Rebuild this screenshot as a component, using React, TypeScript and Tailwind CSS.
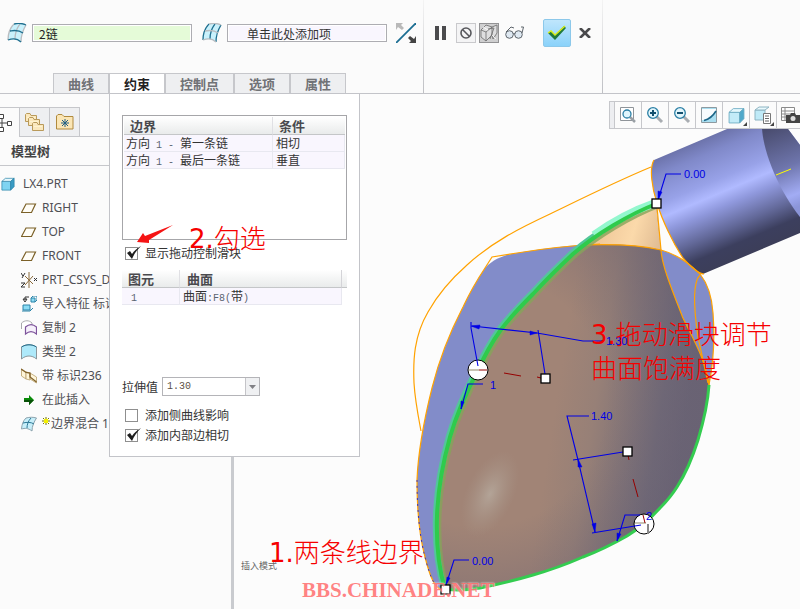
import { ReactNode } from "react";

const SONG = "font-['Noto_Sans_CJK_SC',sans-serif]";

const QuiltIcon = ({ flip = false }: { flip?: boolean }) => (
  <svg width="20" height="20" viewBox="0 0 20 20" fill="none">
    <path d="M7 1C11 0 15 0 19 2C16 7 14 12 14 19C10 15 6 16 1 17C1 11 3 5 7 1Z" fill="#c9f1fc" />
    <path d="M7 1C3 5 1 11 1 17M19 2C16 7 14 12 14 19" stroke={flip ? "#1f6f8f" : "#b8bcc0"} strokeWidth="1.3" />
    <path d="M13 1C9 6 8 10 8 16" stroke={flip ? "#1f6f8f" : "#b8bcc0"} strokeWidth="1.3" />
    <path d="M7 1C11 0 15 0 19 2M1 17C6 15 10 15 14 19M3 8C8 7 12 7 16 10" stroke={flip ? "#b8bcc0" : "#1f6f8f"} strokeWidth="1.3" />
  </svg>
);

const SwapIcon = () => (
  <svg width="20" height="20" viewBox="0 0 20 20">
    <path d="M0 20L20 0" stroke="#1b6d92" strokeWidth="1.8" />
    <path d="M0 0H7L5 2L8 5L6 7L2 4L0 7Z" fill="#b9b9b9" />
    <path d="M20 20H13L15 18L12 15L14 13L18 16L20 13Z" fill="#444" />
  </svg>
);

const CubeIcon = ({ size = 16, pale = false }: { size?: number; pale?: boolean }) => (
  <svg width={size} height={size} viewBox="0 0 16 16" stroke={pale ? "#6aaac2" : "#2a83a8"} strokeWidth="0.8">
    <path d="M1 5H11V15H1Z" fill={pale ? "#c3ebf8" : "#7fd4f2"} />
    <path d="M1 5L5 1.500H15L11 5Z" fill="#e6f8fd" />
    <path d="M11 5L15 1.500V11L11 15Z" fill={pale ? "#4fa9cb" : "#3a9cc4"} />
  </svg>
);

const FolderIcon = ({ x = 0, y = 0 }: { x?: number; y?: number }) => (
  <g transform={`translate(${x} ${y})`}>
    <path d="M0.500 8.500V1.500L1.500 0.500H5L6 2.500H11.500V8.500Z" fill="#fbe8bd" stroke="#b99a5b" />
    <path d="M2 4.500H10" stroke="#fff3d0" />
  </g>
);

const PlaneIcon = () => (
  <svg width="16" height="16" viewBox="0 0 16 16">
    <path d="M5 4H14.500L10.500 12.500H0.500Z" fill="#fffdf6" stroke="#7b6027" strokeWidth="1.200" />
  </svg>
);

const CsysIcon = () => (
  <svg width="16" height="16" viewBox="0 0 16 16" fill="none">
    <path d="M8 0V16M4 4L12 12M12 4L4 13" stroke="#8a6a3a" />
    <path d="M0 1L2 4M4 1L1 6M0 11H4L0 15H4M13 6L16 9M16 6L13 9" stroke="#333" />
  </svg>
);

const ImportIcon = () => (
  <svg width="16" height="16" viewBox="0 0 16 16">
    <path d="M10 2H14V6H10ZM2 9H9V14H2Z" fill="#8bdcf5" stroke="#2a83a8" />
    <path d="M10 2L12 0H16V4L14 6M1 15H9L12 12" fill="none" stroke="#2a83a8" />
    <path d="M8 1H4V4M2 3L4 6L6 3Z" fill="none" stroke="#333" />
  </svg>
);

const CopyIcon = () => (
  <svg width="16" height="16" viewBox="0 0 16 16">
    <path d="M0.500 9V3C4 0 8 0 11 3V6" fill="#fff" stroke="#a9a9ad" />
    <path d="M4.500 14V7C8 4 12 4 15.500 7V14C12 11 8 11 4.500 14Z" fill="#f6f0fb" stroke="#7d539b" strokeWidth="1.200" />
  </svg>
);

const StyleIcon = () => (
  <svg width="16" height="16" viewBox="0 0 16 16">
    <path d="M0.500 15V3C5 0 11 0 15.500 3V15C11 11 5 11 0.500 15Z" fill="#aee9fa" stroke="#8c979c" />
    <path d="M0.500 3C5 0 11 0 15.500 3" fill="none" stroke="#1f6f8f" />
  </svg>
);

const BandIcon = () => (
  <svg width="16" height="16" viewBox="0 0 16 16" fill="#fff6da" stroke="#b7a06c" strokeWidth="0.800">
    <path d="M0.500 1L5 4V11L0.500 8Z" />
    <path d="M5 4L9 5V12L5 11ZM9 5L15.500 9V15L9 11Z" />
    <path d="M0 1L5 4.500L9 5V9L15.500 14" fill="none" stroke="#80622b" strokeWidth="1.300" />
  </svg>
);

const InsertIcon = () => (
  <svg width="16" height="16" viewBox="0 0 16 16">
    <path d="M3 6H8V3L13 8L8 13V10H3Z" fill="#0a8a0a" />
    <path d="M3 8H13L8 13V10H3Z" fill="#075207" />
  </svg>
);

const BlendIcon = () => (
  <svg width="16" height="16" viewBox="0 0 16 16">
    <path d="M5 2C9 1 12 1 15.500 2C13 6 11 10 11 15C7 12 4 12 0.500 13C1 8 2 5 5 2Z" fill="#c7effa" stroke="#8da3ad" />
    <path d="M10 2C7 5 6 9 6 12M2 7C6 6 10 6 13 8" fill="none" stroke="#2d7896" />
  </svg>
);

const tabs = ["曲线", "约束", "控制点", "选项", "属性"];

const Divider = () => (
  <div className="w-px shrink-0 self-stretch bg-gradient-to-b from-[#f4f4f4] to-[#bfc0c4]" />
);

const CheckRow = ({ id, label, checked }: { id: string; label: string; checked?: boolean }) => (
  <div className="flex h-5 items-center gap-[7px] pl-[3px]">
    <span className="relative size-[13px]">
      <input
        id={id}
        type="checkbox"
        defaultChecked={checked}
        className="peer block size-[13px] appearance-none border border-[#8f8f8f] bg-white"
      />
      <svg
        className="pointer-events-none absolute top-0 left-0 hidden overflow-visible peer-checked:block"
        width="16"
        height="13"
        viewBox="0 0 16 13"
      >
        <path d="M2 6L5 4L7 7C9 4 12 1 16 -1C12 3 9 7 7 12Z" fill="#1d1d1d" />
      </svg>
    </span>
    <label htmlFor={id} className="text-xs text-[#333]">
      {label}
    </label>
  </div>
);

const Mono = ({ children }: { children: ReactNode }) => (
  <span className="font-['Liberation_Mono',monospace] text-[10px] leading-none whitespace-pre text-[#5b6570]">
    {children}
  </span>
);

const ConstraintPanel = () => {
  const head = "h-[18px] border-b border-[#c4c6c8] bg-gradient-to-b from-white to-[#e9ebeb] p-0 text-left text-[13px] leading-[17px] font-bold text-[#4a4a4e]";
  const cell = "h-[17px] border-r border-b border-[#e8e8f0] bg-[#f9f6fe] p-0 text-xs leading-4";
  return (
    <section className="absolute top-full left-[109px] z-20 h-[364px] w-[251px] border border-[#c3c4c9] bg-white px-3 pt-[21px] text-[#333]">
      <div className="h-[125px] w-[225px] border border-[#a6a6a9] p-px">
        <table className="w-full table-fixed border-separate border-spacing-0">
          <thead>
            <tr>
              <th className={`${head} w-[149px] border-r border-r-[#e0e0e4] pl-[6px]`}>边界</th>
              <th className={`${head} pl-[6px]`}>条件</th>
            </tr>
          </thead>
          <tbody>
            <tr>
              <td className={`${cell} pl-[2px]`}>
                方向<Mono> 1 - </Mono>第一条链
              </td>
              <td className={`${cell} pl-[3px]`}>相切</td>
            </tr>
            <tr>
              <td className={`${cell} pl-[2px]`}>
                方向<Mono> 1 - </Mono>最后一条链
              </td>
              <td className={`${cell} pl-[3px]`}>垂直</td>
            </tr>
          </tbody>
        </table>
      </div>
      <div className="mt-[3px]">
        <CheckRow id="show-handles" label="显示拖动控制滑块" checked />
      </div>
      <div className="mt-[7px] h-[104px]">
        <table className="w-[225px] table-fixed border-separate border-spacing-0">
          <thead>
            <tr>
              <th className={`${head} w-[58px] border-r border-r-[#e0e0e4] pl-[6px]`}>图元</th>
              <th className={`${head} border-r border-r-[#d4d4d8] pl-[7px]`}>曲面</th>
              <th className={`${head} w-[5px]`} />
            </tr>
          </thead>
          <tbody>
            <tr>
              <td className={`${cell} pl-[9px]`}>
                <Mono>1</Mono>
              </td>
              <td className={`${cell} pl-[3px]`}>
                曲面<Mono>:F8(</Mono>带<Mono>)</Mono>
              </td>
              <td />
            </tr>
          </tbody>
        </table>
      </div>
      <div className="mt-[3px] flex items-center gap-1">
        <label htmlFor="stretch" className="text-xs">
          拉伸值
        </label>
        <div className="relative">
          <select
            id="stretch"
            className="block h-[19px] w-[98px] appearance-none border border-[#b4b4b8] bg-white pl-1 font-['Liberation_Mono',monospace] text-[10px] text-[#5b5046]"
          >
            <option>1.30</option>
          </select>
          <span className="pointer-events-none absolute top-px right-px bottom-px flex w-[14px] items-center justify-center border-l border-[#c4c4c8] bg-[#eff0f2]">
            <svg width="7" height="4">
              <path d="M0 0H7L3.500 4Z" fill="#808085" />
            </svg>
          </span>
        </div>
      </div>
      <div className="mt-[9px]">
        <CheckRow id="side-curve" label="添加侧曲线影响" />
        <CheckRow id="inner-tangent" label="添加内部边相切" checked />
      </div>

      <svg className="absolute top-[130px] left-[26px]" width="38" height="20" viewBox="136 224 38 20">
        <path d="M137 242L143 233L145 236L173 225L149 240L149 243Z" fill="#f51414" />
      </svg>
      <p className="absolute top-[128px] left-[79px] font-['DejaVu_Sans','Noto_Sans_CJK_SC',sans-serif] text-[26px] leading-[34px] font-light whitespace-nowrap text-[#f60000]">
        <span className="font-normal">2.</span>勾选
      </p>
    </section>
  );
};

const Dashboard = () => (
  <header className="relative z-20 flex h-[94px] border-b border-[#c3c4c9] bg-[#fbfbfb]">
    <div className="flex w-[423px] flex-col justify-between pt-[23px]">
      <div className="flex items-center pl-[7px]">
        <QuiltIcon />
        <input
          aria-label="第一方向链"
          defaultValue="2链"
          className="mr-[10px] ml-[5px] h-[18px] w-40 border border-[#adadb2] bg-[#e5fbd8] px-[6px] text-xs text-[#222] shadow-[inset_0_0_0_1px_#fff]"
        />
        <QuiltIcon flip />
        <input
          aria-label="第二方向链"
          defaultValue="单击此处添加项"
          className="mr-[9px] ml-[5px] h-[18px] w-40 border border-[#adadb2] bg-[#f9f6fe] px-[19px] text-xs text-[#333] shadow-[inset_0_0_0_1px_#fff]"
        />
        <button aria-label="交换">
          <SwapIcon />
        </button>
      </div>
      <nav className="flex pl-[53px]">
        {tabs.map((tab) => (
          <button
            key={tab}
            className={`h-5 border-x border-t border-[#c6c7cb] px-[14px] text-[13px] leading-[18px] font-bold whitespace-nowrap ${
              tab === "约束" ? "bg-white text-[#222]" : "bg-[#eeeff1] text-[#707276]"
            }`}
          >
            {tab}
          </button>
        ))}
      </nav>
    </div>
    <Divider />
    <div className="flex h-[66px] w-[178px] items-center pl-[11px]">
      <button aria-label="暂停" className="mr-[10px]">
        <svg width="11" height="14">
          <path d="M0 0H4V14H0ZM7 0H11V14H7Z" fill="#4b4b4d" />
        </svg>
      </button>
      <button aria-label="无预览" className="mr-[3px] flex size-5 items-center justify-center border border-[#c9c9cc] bg-[#f4f4f5]">
        <svg width="12" height="12" viewBox="0 0 12 12" fill="none" stroke="#57585c" strokeWidth="1.600">
          <circle cx="6" cy="6" r="5" />
          <path d="M2.500 2.500L9.500 9.500" />
        </svg>
      </button>
      <button aria-label="分离" className="mr-[6px] flex size-5 items-center justify-center border border-[#929294] bg-[#cfcfd0]">
        <svg width="18" height="18" viewBox="0 0 18 18" fill="none" stroke="#6a6a6a" strokeWidth="0.800">
          <path d="M1 6L5 1L12 3L17 1V9L13 15L12 11L6 17L1 13Z" fill="#dededf" stroke="none" />
          <path d="M1 6L6 8V17L1 13ZM6 8L12 3V11L6 17M1 6L6 1L12 3M12 3L17 1V9L13 15L12 11" />
          <path d="M3 3L8 6M12 11L16 15" stroke="#fff" />
          <path d="M8 5L14 4L10 15" />
        </svg>
      </button>
      <button aria-label="检查" className="mr-[18px]">
        <svg width="20" height="14" viewBox="0 0 20 14" fill="none" stroke="#5d646b">
          <circle cx="4.500" cy="8.500" r="3.800" fill="#dfe9f2" />
          <circle cx="13.500" cy="8.500" r="3.800" fill="#dfe9f2" />
          <path d="M8 8Q9 7 10 8M1 6L6 1L9 2M17 7L18.500 1L16 1" />
        </svg>
      </button>
      <button aria-label="确定" className="mr-2 flex size-7 items-center justify-center rounded-xs border border-[#8cc8ea] bg-gradient-to-b from-[#bfe6fc] to-[#8ad2fa]">
        <svg width="20" height="16" viewBox="0 0 20 16">
          <path d="M1 8L4 6L8 10L17 1L19 3L8 15Z" fill="#217a3c" />
          <path d="M1 8L4 6L8 10L18 1" fill="none" stroke="#d9ee1c" strokeWidth="1.500" />
        </svg>
      </button>
      <button aria-label="取消">
        <svg width="12" height="10" viewBox="0 0 12 10">
          <path d="M1 0L11 10M11 0L1 10" stroke="#4a4a4c" strokeWidth="2.600" />
        </svg>
      </button>
    </div>
    <Divider />
    <ConstraintPanel />
  </header>
);

const treeItems = [
  { label: "RIGHT", icon: <PlaneIcon /> },
  { label: "TOP", icon: <PlaneIcon /> },
  { label: "FRONT", icon: <PlaneIcon /> },
  { label: "PRT_CSYS_DEF", icon: <CsysIcon /> },
  { label: "导入特征 标识", icon: <ImportIcon /> },
  { label: "复制 2", icon: <CopyIcon /> },
  { label: "类型 2", icon: <StyleIcon /> },
  { label: "带 标识236", icon: <BandIcon /> },
  { label: "在此插入", icon: <InsertIcon /> },
  { label: "边界混合 1", icon: <BlendIcon />, pending: true },
];

const ModelTree = () => (
  <aside className="w-[234px] shrink-0 overflow-hidden border-r-[3px] border-[#c9cbcf] bg-[#fbfbfb] pt-[13px]">
    <div className="flex h-[30px] border-b border-[#c6c7cb]">
      <button aria-label="模型树" className="-mb-px w-5 border-t border-r border-[#c6c7cb] bg-[#fbfbfb]">
        <svg width="13" height="20" viewBox="0 0 13 20" fill="#fff" stroke="#444">
          <path d="M-2 10H7M2 4V16" />
          <path d="M-1 1.500H3.500V5.500H-1ZM-1 14.500H3.500V18.500H-1ZM7.500 8.500H11.500V12.500H7.500Z" />
        </svg>
      </button>
      <button aria-label="文件夹浏览器" className="flex w-[30px] items-center justify-center border-t border-r border-[#c6c7cb] bg-[#eeeff1]">
        <svg width="20" height="20" viewBox="0 0 20 20">
          <FolderIcon x={0} y={1} />
          <FolderIcon x={3} y={5} />
          <FolderIcon x={7} y={10} />
        </svg>
      </button>
      <button aria-label="收藏夹" className="flex w-[30px] items-center justify-center border-t border-r border-[#c6c7cb] bg-[#eeeff1]">
        <svg width="18" height="16" viewBox="0 0 18 16">
          <path d="M0.500 15V2L2 0.500H6L8 2.500H17V15Z" fill="#fbe6b5" stroke="#b08a3e" />
          <path d="M9 5V13M5 9H13M6 6L12 12M12 6L6 12" stroke="#1f5f85" />
        </svg>
      </button>
    </div>
    <h2 className="h-[29px] border-b border-[#c6c7cb] pl-[11px] text-[13px] leading-7 font-bold text-[#444]">模型树</h2>
    <ul className="pt-[6px] font-['Noto_Sans','Noto_Sans_CJK_SC',sans-serif] text-xs whitespace-nowrap text-[#4f4f54]">
      <li className="flex h-6 items-center gap-2 pl-[1px]">
        <CubeIcon size={14} />
        LX4.PRT
      </li>
      {treeItems.map((item) => (
        <li key={item.label} className="flex h-6 items-center gap-[5px] pl-[21px]">
          {item.icon}
          <span className="flex items-center">
            {item.pending && (
              <svg width="9" height="14" viewBox="0 0 9 14">
                <path d="M4 0V8M0 4H8M1 1L7 7M7 1L1 7" stroke="#777700" />
                <path d="M2 2H6V6H2Z" fill="#f4f000" />
              </svg>
            )}
            {item.label}
          </span>
        </li>
      ))}
    </ul>
  </aside>
);

const Magnifier = ({ sign }: { sign: string }) => (
  <svg width="18" height="18" viewBox="0 0 18 18" fill="none">
    <path d="M10 10L16 16" stroke="#a9adb2" strokeWidth="3" />
    <circle cx="7" cy="7" r="5.300" fill="#e3f6fc" stroke="#2b7fa5" strokeWidth="1.300" />
    <path d={sign} stroke="#12506f" strokeWidth="2" />
  </svg>
);

const Corner = () => (
  <svg className="absolute right-[2px] bottom-[2px]" width="4" height="4">
    <path d="M4 0V4H0Z" fill="#444" />
  </svg>
);

const viewTools = [
  {
    label: "重新调整",
    icon: (
      <svg width="18" height="18" viewBox="0 0 18 18" fill="none">
        <path d="M1.500 1.500H14.500V14.500H1.500Z" fill="#fff" stroke="#8f9499" />
        <path d="M11 11L16 16" stroke="#9aa0a5" strokeWidth="2.500" />
        <circle cx="8" cy="8" r="4" fill="#dff5fc" stroke="#2b7fa5" strokeWidth="1.300" />
      </svg>
    ),
  },
  { label: "放大", icon: <Magnifier sign="M4 7H10M7 4V10" /> },
  { label: "缩小", icon: <Magnifier sign="M4 7H10" /> },
  {
    label: "重画",
    icon: (
      <svg width="16" height="16" viewBox="0 0 16 16">
        <path d="M0.500 0.500H15.500V15.500H0.500Z" fill="#a9def0" stroke="#8e9aa0" />
        <path d="M1 2H15V4C13 9 9 12 3 13H1Z" fill="#f7fcfe" />
        <path d="M3 13.500C9 12 12 9 15 4" stroke="#1b6688" strokeWidth="1.600" fill="none" />
      </svg>
    ),
  },
  { label: "显示样式", icon: <CubeIcon size={17} pale />, menu: true },
  {
    label: "已保存方向",
    menu: true,
    icon: (
      <svg width="18" height="18" viewBox="0 0 18 18">
        <path d="M1 4H11V14H1Z" fill="#bfeaf7" stroke="#8eb4c2" />
        <path d="M1 4L5 1H15L11 4Z" fill="#e9f9fd" stroke="#8eb4c2" />
        <path d="M9.500 7.500H16.500V17.500H9.500Z" fill="#fff" stroke="#777" />
        <path d="M11 10H15M11 12.500H15M11 15H15" stroke="#666" />
      </svg>
    ),
  },
  {
    label: "视图管理器",
    icon: (
      <svg width="20" height="18" viewBox="0 0 20 18">
        <path d="M1.500 1.500H14.500V14.500H1.500ZM1 5H14M1 8H14M1 11H14M5 1V14" fill="#fff" stroke="#8a8a8a" />
        <path d="M6 9H10L11 7H15L16 9H20V17H6Z" fill="#444" />
        <circle cx="13" cy="12.500" r="2.500" fill="#ddd" />
      </svg>
    ),
  },
];

const Handle = ({ x, y }: { x: number; y: number }) => (
  <rect x={x - 4} y={y - 4} width="9" height="9" fill="#fff" stroke="#000" strokeWidth="1.300" />
);

const leftEdge =
  "M656 204C630 214 596 234 573 254C558 268 545 281 533 294C519 308 510 317 500 331C490 345 484 357 478 370C465 395 456 416 450 437C443 462 438 487 437 516C436 545 438 566 445 589";
const bottomCurve =
  "C458 591 468 590 480 588C500 584 516 580 533 575C551 570 567 564 583 557C599 551 613 544 627 536C640 528 650 519 660 508C667 501 672 495 677 487C688 470 693 456 698 440C704 420 708 401 709 385";
const skinOutline = `${leftEdge}${bottomCurve}C706 360 692 337 683 318C670 285 662 265 661 250Z`;

const Model = () => (
  <svg className="absolute top-0 left-0 h-full w-full" viewBox="234 94 566 515" preserveAspectRatio="xMinYMin slice">
    <defs>
      <linearGradient id="tube" gradientUnits="userSpaceOnUse" x1="700" y1="141" x2="748" y2="255">
        <stop offset="0" stopColor="#6d74ac" />
        <stop offset="0.120" stopColor="#8089c9" />
        <stop offset="0.340" stopColor="#98a2e8" />
        <stop offset="0.450" stopColor="#b0baff" />
        <stop offset="0.560" stopColor="#8f98dc" />
        <stop offset="0.740" stopColor="#626898" />
        <stop offset="0.880" stopColor="#3c3f5e" />
        <stop offset="1" stopColor="#3c3e59" />
      </linearGradient>
      <linearGradient id="bore" gradientUnits="userSpaceOnUse" x1="772" y1="128" x2="802" y2="205">
        <stop offset="0" stopColor="#4a4d70" />
        <stop offset="0.500" stopColor="#6e75ac" />
        <stop offset="0.850" stopColor="#a2acf4" />
        <stop offset="1" stopColor="#8b95d8" />
      </linearGradient>
      <linearGradient id="skin" gradientUnits="userSpaceOnUse" x1="560" y1="375" x2="690" y2="395">
        <stop offset="0" stopColor="#a18476" />
        <stop offset="0.300" stopColor="#978077" />
        <stop offset="0.800" stopColor="#716a78" />
        <stop offset="1" stopColor="#6b6576" />
      </linearGradient>
      <linearGradient id="cap" gradientUnits="userSpaceOnUse" x1="600" y1="225" x2="665" y2="245">
        <stop offset="0" stopColor="#efc799" />
        <stop offset="0.500" stopColor="#fbd9aa" />
        <stop offset="1" stopColor="#dcb78f" />
      </linearGradient>
      <radialGradient id="shade" gradientUnits="userSpaceOnUse" cx="480" cy="400" r="230">
        <stop offset="0.550" stopColor="#675f70" stopOpacity="0" />
        <stop offset="1" stopColor="#675f70" stopOpacity="0.500" />
      </radialGradient>
      <radialGradient id="glow">
        <stop offset="0" stopColor="#b8aca0" stopOpacity="0.800" />
        <stop offset="1" stopColor="#a8978a" stopOpacity="0" />
      </radialGradient>
    </defs>

    {/* blue back surface */}
    <path
      d="M485 268C495 258 505 255 517 253C540 249 563 246 583 245C610 244 640 245 661 250C676 254 690 264 700 274C708 284 712 298 713 313C715 340 713 365 709 385L600 540L445 591C435 590 430 577 425 557C419 535 417 505 417 480C418 455 424 420 432 388C439 360 451 330 463 307C470 292 477 280 485 268Z"
      fill="#828cc9"
    />
    {/* front skin */}
    <path d={skinOutline} fill="url(#skin)" />
    <path d={skinOutline} fill="url(#shade)" />
    <ellipse cx="490" cy="494" rx="24" ry="46" fill="url(#glow)" transform="rotate(25 490 494)" />
    <path d="M656 204C630 214 602 230 582 246C610 243 640 245 661 250Z" fill="url(#cap)" />
    <path d="M657 207L661 250C676 254 690 264 700 273C682 258 667 232 657 207Z" fill="#fcfcfc" />

    {/* tube */}
    <path d="M654 160L727 129H788L800 145V233L703 274C698 274 690 266 683 258C673 243 662 220 657 203C652 188 649 168 654 160Z" fill="url(#tube)" />
    <path d="M762 129C764 155 780 192 800 217V145L788 129Z" fill="url(#bore)" />
    <path d="M776 175L791 169" stroke="#ffff00" />

    <g fill="none" stroke="#ffa200" strokeWidth="1.200">
      <path d="M654 160C649 168 652 188 657 203C662 220 673 243 683 258C690 266 698 274 704 274" />
      <path d="M651 167C615 182 585 197 550 214C520 228 492 242 467 265C450 280 438 294 428 312C414 336 413 360 414 383C415 400 418 415 421 431" />
      <path d="M600 244C563 246 540 249 517 253L492 257L485 268C477 280 470 292 463 307C451 330 439 360 432 388C424 420 418 455 417 480C417 505 419 535 425 557C430 577 435 590 445 591L480 588" />
      <path d="M583 245C610 244 640 245 661 250C676 254 690 264 700 274C708 284 712 298 713 313C715 340 713 365 709 385" />
      <path d="M657 207L661 250C662 265 670 285 683 318C692 337 706 360 709 385" />
      <path d="M700 275C692 283 694 310 698 337L708 383" />
    </g>
    <path
      d="M417 480C417 505 419 535 425 557C430 577 435 590 445 591L480 588"
      fill="none"
      stroke="#1616d0"
      strokeWidth="0.800"
      strokeDasharray="2 4"
    />

    <path d={leftEdge} fill="none" stroke="#86a45a" strokeWidth="7" strokeOpacity="0.800" transform="translate(1 1)" />
    <path d={leftEdge} fill="none" stroke="#53c69a" strokeWidth="6" transform="translate(-1 -1)" />
    <path d="M655 203C635 210 612 222 594 235" fill="none" stroke="#93f7ce" strokeWidth="8" />
    <path d={leftEdge} fill="none" stroke="#2fcb4c" strokeWidth="4" />
    <path d={`M445 589${bottomCurve}`} fill="none" stroke="#34cc50" strokeWidth="3" />

    <circle cx="478" cy="370" r="10" fill="#fff" stroke="#000" />
    <path d="M469 370H479" stroke="#c8c4b4" strokeWidth="2" />
    <circle cx="644" cy="524" r="10" fill="#fff" stroke="#000" />
    <path d="M635 523H646" stroke="#c8c4b4" strokeWidth="2" />
    <path d="M648 524V534" stroke="#888" strokeWidth="2" />

    {/* dimensions */}
    <g fill="none" stroke="#0000e6" strokeWidth="1.100">
      <path d="M681 174H666L658 200M471 322V328L478 366M472 326L537 333L583 341H603M538 330L545 374" />
      <path d="M483 384H468L461 409M589 416H567L578 460L595 532M573 460L623 452M592 533L641 525M640 515H625L617 541M469 560H454L446 585" />
    </g>
    <path
      d="M658 200L658 191L662 192ZM471 326L480 325L479 329ZM537 333L530 331L530 335ZM461 409L461 401L464 402ZM578 459L578 467L582 467ZM595 532L592 524L596 523ZM617 541L617 533L621 534ZM446 585L447 577L450 578Z"
      fill="#0000e6"
      stroke="#0000e6"
      strokeWidth="0.500"
    />
    <path d="M479 370H487M504 373L521 376M537 377L541 378M628 455L629 460M633 479L638 497M643 515L645 523" stroke="#960000" />
    <Handle x={656} y={203} />
    <Handle x={545} y={378} />
    <Handle x={627} y={451} />
    <Handle x={445} y={589} />
    <g className="font-['Liberation_Sans',sans-serif] text-[11px]" fill="#0000e6">
      <text x="684" y="178">0.00</text>
      <text x="606" y="345">1.30</text>
      <text x="490" y="389">1</text>
      <text x="591" y="420">1.40</text>
      <text x="646" y="520">2</text>
      <text x="472" y="565">0.00</text>
    </g>
  </svg>
);

const Viewport = () => {
  const note = "absolute font-['DejaVu_Sans','Noto_Sans_CJK_SC',sans-serif] text-[26px] leading-[34px] font-light whitespace-nowrap text-[#f60000]";
  return (
    <main className="relative min-w-0 flex-1 overflow-hidden bg-[#fcfcfc]">
      <Model />
      <div className="absolute top-[7px] left-[375px] flex h-7 border border-[#c6c7cb] bg-[#fbfbfb]">
        <span className="w-[5px] border-r border-[#c6c7cb] bg-[#edeef1]" />
        {viewTools.map((tool) => (
          <button
            key={tool.label}
            aria-label={tool.label}
            className="relative flex w-[27px] shrink-0 items-center justify-center border-r border-[#c6c7cb]"
          >
            {tool.icon}
            {tool.menu && <Corner />}
          </button>
        ))}
      </div>
      <p className="absolute top-[465px] left-[7px] text-[9px] leading-[14px] text-[#666]">插入模式</p>
      <p className={`${note} top-[442px] left-[35px]`}>
        <span className="font-normal">1.</span>两条线边界
      </p>
      <p className={`${note} top-[224px] left-[357px]`}>
        <span className="font-normal">3.</span>拖动滑块调节
        <br />
        曲面饱满度
      </p>
      <p className="absolute top-[484px] left-[68px] font-['Liberation_Serif',serif] text-[21px] leading-6 font-bold text-[#ff5a5a]/75 [text-shadow:0_0_2px_#fff]">
        BBS.CHINADE.NET
      </p>
    </main>
  );
};

const App = () => (
  <div className={`flex min-h-screen flex-col overflow-hidden bg-[#fcfcfc] ${SONG}`}>
    <Dashboard />
    <div className="flex flex-1">
      <ModelTree />
      <Viewport />
    </div>
  </div>
);

export default App;
